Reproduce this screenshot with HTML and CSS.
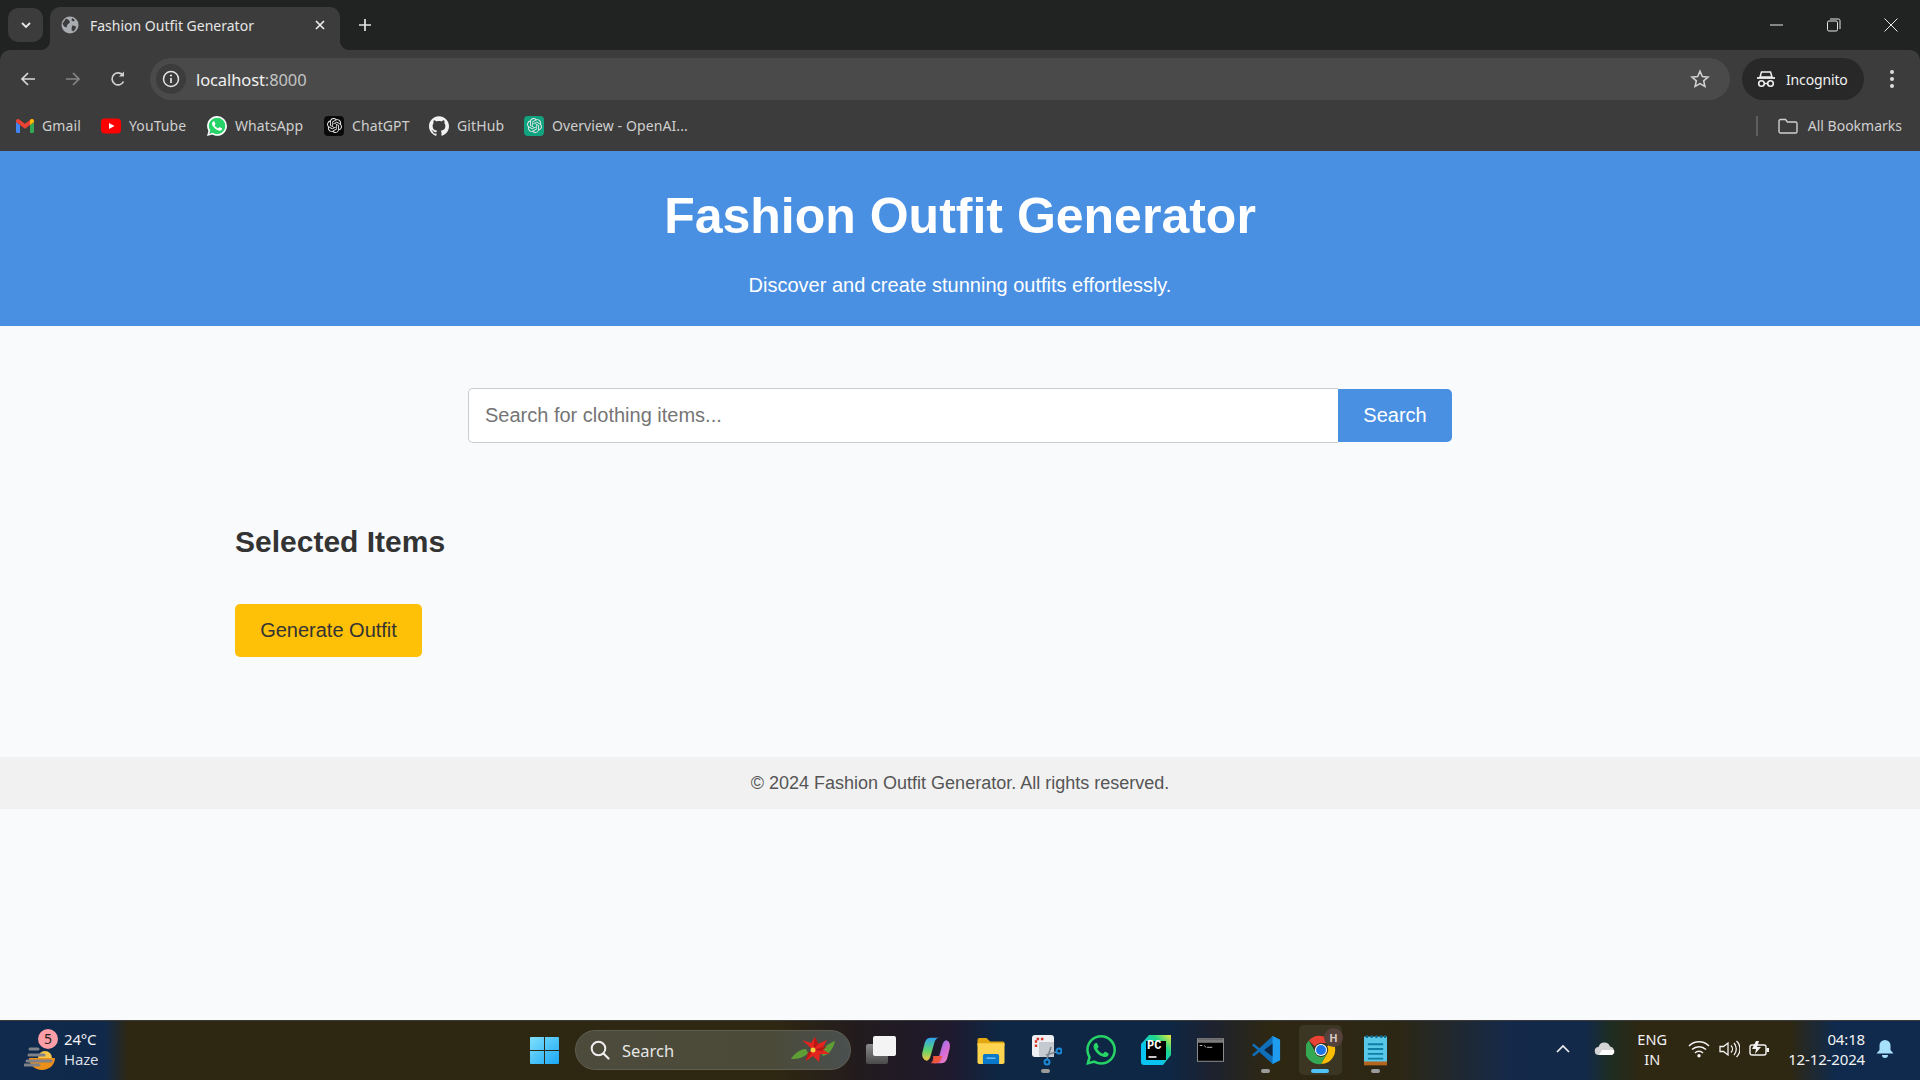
FILE: index.html
```html
<!DOCTYPE html>
<html lang="en">
<head>
<meta charset="utf-8">
<title>Fashion Outfit Generator</title>
<link rel="stylesheet" href="styles.css">
</head>
<body>
<div class="browser">
  <div class="tabstrip">
    <div class="tab-search"><svg width="14" height="14" viewBox="0 0 14 14"><path d="M3 5l4 4 4-4" fill="none" stroke="#e8e8e8" stroke-width="1.8"/></svg></div>
    <div class="tab">
      <svg class="favicon" width="18" height="18" viewBox="0 0 18 18"><circle cx="9" cy="9" r="8.500" fill="#a9adb1"/><path d="M5 2.500l3 1.500 1 2.500-2.500 2-1 3-2.500-1-1.500-3zM11 9.500l3.500.5.500 2-2.500 3.500-2-1.500z M11 2l3 2-1.500 1.500-2-1z" fill="#3c3c3c"/></svg>
      <span class="tab-title">Fashion Outfit Generator</span>
      <svg class="tab-close" width="12" height="12" viewBox="0 0 12 12"><path d="M2 2l8 8M10 2l-8 8" stroke="#eee" stroke-width="1.700"/></svg>
    </div>
    <svg class="new-tab" width="14" height="14" viewBox="0 0 14 14"><path d="M7 1v12M1 7h12" stroke="#e4e4e4" stroke-width="1.700"/></svg>
    <div class="win-controls">
      <svg width="14" height="14" viewBox="0 0 14 14"><path d="M0 7h13" stroke="#e8e8e8"/></svg>
      <svg width="14" height="14" viewBox="0 0 14 14"><rect x=".5" y="3" width="10" height="10" rx="1.500" fill="none" stroke="#e8e8e8"/><path d="M3 1h8.500A1.500 1.500 0 0 1 13 2.500V11" fill="none" stroke="#e8e8e8"/></svg>
      <svg width="14" height="14" viewBox="0 0 14 14"><path d="M.5.5l13 13M13.500.5l-13 13" stroke="#e8e8e8"/></svg>
    </div>
  </div>
  <div class="toolbar">
    <div class="nav-btns">
      <svg width="18" height="18" viewBox="0 0 18 18"><path d="M16 9H3M9 3L3 9l6 6" fill="none" stroke="#d8d8d8" stroke-width="1.700"/></svg>
      <svg width="18" height="18" viewBox="0 0 18 18"><path d="M2 9h13M9 3l6 6-6 6" fill="none" stroke="#858585" stroke-width="1.700"/></svg>
      <svg width="18" height="18" viewBox="0 0 18 18"><path d="M14.500 11.500A6 6 0 1 1 14 5.500" fill="none" stroke="#d0d0d0" stroke-width="1.700"/><path d="M15 1.500v5h-5z" fill="#d0d0d0"/></svg>
    </div>
    <div class="omnibox">
      <div class="info-chip"><svg width="18" height="18" viewBox="0 0 18 18"><circle cx="9" cy="9" r="7.500" fill="none" stroke="#e4e4e4" stroke-width="1.500"/><path d="M9 8v5" stroke="#e4e4e4" stroke-width="1.700"/><circle cx="9" cy="5.500" r="1.100" fill="#e4e4e4"/></svg></div>
      <span class="url">localhost<span class="url-port">:8000</span></span>
      <svg class="star" width="20" height="20" viewBox="0 0 20 20"><path d="M10 2.300l2.300 5.200 5.700.6-4.300 3.800 1.200 5.600-4.900-2.900-4.900 2.900 1.200-5.600L2 8.100l5.700-.6z" fill="none" stroke="#d0d0d0" stroke-width="1.600"/></svg>
    </div>
    <div class="incognito">
      <svg width="20" height="18" viewBox="0 0 20 18"><path d="M5.500 2h9l1.500 5H4z" fill="none" stroke="#f0f0f0" stroke-width="1.500"/><path d="M1 8h18" stroke="#f0f0f0" stroke-width="1.800"/><circle cx="5.500" cy="13.500" r="2.800" fill="none" stroke="#f0f0f0" stroke-width="1.600"/><circle cx="14.500" cy="13.500" r="2.800" fill="none" stroke="#f0f0f0" stroke-width="1.600"/><path d="M8.500 13.500h3" stroke="#f0f0f0" stroke-width="1.500"/></svg>
      <span>Incognito</span>
    </div>
    <svg class="menu-dots" width="6" height="20" viewBox="0 0 6 20"><circle cx="3" cy="3" r="2" fill="#ddd"/><circle cx="3" cy="10" r="2" fill="#ddd"/><circle cx="3" cy="17" r="2" fill="#ddd"/></svg>
  </div>
  <div class="bookmarks">
    <div class="bm bm-gmail">
      <svg width="18" height="14" viewBox="0 0 18 14"><path d="M0 3v9.500A1.500 1.500 0 0 0 1.500 14H4V6z" fill="#4285f4"/><path d="M14 6v8h2.500a1.500 1.500 0 0 0 1.500-1.500V3z" fill="#34a853"/><path d="M0 3l4 3 5 3.700L14 6l4-3V2C18 .3 16 -.5 14.800.5L9 4.800 3.200.5C2 -.5 0 .3 0 2z" fill="#ea4335"/><path d="M14 6l4-3V2C18 .3 16 -.5 14.800.500L14 1z" fill="#fbbc04"/></svg>
      <span>Gmail</span>
    </div>
    <div class="bm bm-yt">
      <svg width="20" height="20" viewBox="0 0 20 20"><rect y="2.500" width="20" height="15" rx="4" fill="#f00"/><path d="M8 7l5.500 3L8 13z" fill="#fff"/></svg>
      <span>YouTube</span>
    </div>
    <div class="bm bm-wa">
      <svg width="20" height="20" viewBox="0 0 24 24"><circle cx="12" cy="12" r="11.500" fill="#25d366"/><path fill="#fff" d="M17.472 14.382c-.297-.149-1.758-.867-2.030-.967-.273-.099-.471-.148-.670.150-.197.297-.767.966-.940 1.164-.173.199-.347.223-.644.075-.297-.150-1.255-.463-2.390-1.475-.883-.788-1.480-1.761-1.653-2.059-.173-.297-.018-.458.130-.606.134-.133.298-.347.446-.520.149-.174.198-.298.298-.497.099-.198.050-.371-.025-.520-.075-.149-.669-1.612-.916-2.207-.242-.579-.487-.500-.669-.510-.173-.008-.371-.010-.570-.010-.198 0-.520.074-.792.372-.272.297-1.040 1.016-1.040 2.479 0 1.462 1.065 2.875 1.213 3.074.149.198 2.096 3.200 5.077 4.487.709.306 1.262.489 1.694.625.712.227 1.360.195 1.871.118.571-.085 1.758-.719 2.006-1.413.248-.694.248-1.289.173-1.413-.074-.124-.272-.198-.570-.347m-5.421 7.403h-.004a9.870 9.870 0 01-5.031-1.378l-.361-.214-3.741.982.998-3.648-.235-.374a9.860 9.860 0 01-1.510-5.260c.001-5.450 4.436-9.884 9.888-9.884 2.640 0 5.122 1.030 6.988 2.898a9.825 9.825 0 012.893 6.994c-.003 5.450-4.437 9.884-9.885 9.884m8.413-18.297A11.815 11.815 0 0012.050 0C5.495 0 .160 5.335.157 11.892c0 2.096.547 4.142 1.588 5.945L.057 24l6.305-1.654a11.882 11.882 0 005.683 1.448h.005c6.554 0 11.890-5.335 11.893-11.893a11.821 11.821 0 00-3.480-8.413Z"/></svg>
      <span>WhatsApp</span>
    </div>
    <div class="bm bm-gpt">
      <span class="gpt-tile gpt-black"><svg width="15" height="15" viewBox="0 0 24 24"><path class="knot" d="M22.2819 9.8211a5.9847 5.9847 0 0 0-.5157-4.9108 6.0462 6.0462 0 0 0-6.5098-2.9A6.0651 6.0651 0 0 0 4.9807 4.1818a5.9847 5.9847 0 0 0-3.9977 2.9 6.0462 6.0462 0 0 0 .7427 7.0966 5.98 5.98 0 0 0 .511 4.9107 6.051 6.051 0 0 0 6.5146 2.9001A5.9847 5.9847 0 0 0 13.2599 24a6.0557 6.0557 0 0 0 5.7718-4.2058 5.9894 5.9894 0 0 0 3.9977-2.9001 6.0557 6.0557 0 0 0-.7475-7.0729zm-9.022 12.6081a4.4755 4.4755 0 0 1-2.8764-1.0408l.1419-.0804 4.7783-2.7582a.7948.7948 0 0 0 .3927-.6813v-6.7369l2.02 1.1686a.071.071 0 0 1 .038.052v5.5826a4.504 4.504 0 0 1-4.4945 4.4944zm-9.6607-4.1254a4.4708 4.4708 0 0 1-.5346-3.0137l.142.0852 4.783 2.7582a.7712.7712 0 0 0 .7806 0l5.8428-3.3685v2.3324a.0804.0804 0 0 1-.0332.0615L9.74 19.9502a4.4992 4.4992 0 0 1-6.1408-1.6464zM2.3408 7.8956a4.485 4.485 0 0 1 2.3655-1.9728V11.6a.7664.7664 0 0 0 .3879.6765l5.8144 3.3543-2.0201 1.1685a.0757.0757 0 0 1-.071 0l-4.8303-2.7865A4.504 4.504 0 0 1 2.3408 7.872zm16.5963 3.8558L13.1038 8.364 15.1192 7.2a.0757.0757 0 0 1 .071 0l4.8303 2.7913a4.4944 4.4944 0 0 1-.6765 8.1042v-5.6772a.79.79 0 0 0-.407-.667zm2.0107-3.0231l-.142-.0852-4.7735-2.7818a.7759.7759 0 0 0-.7854 0L9.409 9.2297V6.8974a.0662.0662 0 0 1 .0284-.0615l4.8303-2.7866a4.4992 4.4992 0 0 1 6.6802 4.66zM8.3065 12.863l-2.02-1.1638a.0804.0804 0 0 1-.038-.0567V6.0742a4.4992 4.4992 0 0 1 7.3757-3.4537l-.142.0805L8.704 5.459a.7948.7948 0 0 0-.3927.6813zm1.0976-2.3654l2.602-1.4998 2.6069 1.4998v2.9994l-2.5974 1.4997-2.6067-1.4997Z"/></svg></span>
      <span>ChatGPT</span>
    </div>
    <div class="bm bm-gh">
      <svg width="20" height="20" viewBox="0 0 24 24"><path fill="#f2f2f2" d="M12 .297c-6.630 0-12 5.373-12 12 0 5.303 3.438 9.800 8.205 11.385.600.113.820-.258.820-.577 0-.285-.010-1.040-.015-2.040-3.338.724-4.042-1.610-4.042-1.610C4.422 18.070 3.633 17.700 3.633 17.700c-1.087-.744.084-.729.084-.729 1.205.084 1.838 1.236 1.838 1.236 1.070 1.835 2.809 1.305 3.495.998.108-.776.417-1.305.760-1.605-2.665-.300-5.466-1.332-5.466-5.930 0-1.310.465-2.380 1.235-3.220-.135-.303-.540-1.523.105-3.176 0 0 1.005-.322 3.300 1.230.960-.267 1.980-.399 3-.405 1.020.006 2.040.138 3 .405 2.280-1.552 3.285-1.230 3.285-1.230.645 1.653.240 2.873.120 3.176.765.840 1.230 1.910 1.230 3.220 0 4.610-2.805 5.625-5.475 5.920.420.360.810 1.096.810 2.220 0 1.606-.015 2.896-.015 3.286 0 .315.210.690.825.570C20.565 22.092 24 17.592 24 12.297c0-6.627-5.373-12-12-12"/></svg>
      <span>GitHub</span>
    </div>
    <div class="bm bm-oai">
      <span class="gpt-tile gpt-green"><svg width="15" height="15" viewBox="0 0 24 24"><path class="knot" d="M22.2819 9.8211a5.9847 5.9847 0 0 0-.5157-4.9108 6.0462 6.0462 0 0 0-6.5098-2.9A6.0651 6.0651 0 0 0 4.9807 4.1818a5.9847 5.9847 0 0 0-3.9977 2.9 6.0462 6.0462 0 0 0 .7427 7.0966 5.98 5.98 0 0 0 .511 4.9107 6.051 6.051 0 0 0 6.5146 2.9001A5.9847 5.9847 0 0 0 13.2599 24a6.0557 6.0557 0 0 0 5.7718-4.2058 5.9894 5.9894 0 0 0 3.9977-2.9001 6.0557 6.0557 0 0 0-.7475-7.0729zm-9.022 12.6081a4.4755 4.4755 0 0 1-2.8764-1.0408l.1419-.0804 4.7783-2.7582a.7948.7948 0 0 0 .3927-.6813v-6.7369l2.02 1.1686a.071.071 0 0 1 .038.052v5.5826a4.504 4.504 0 0 1-4.4945 4.4944zm-9.6607-4.1254a4.4708 4.4708 0 0 1-.5346-3.0137l.142.0852 4.783 2.7582a.7712.7712 0 0 0 .7806 0l5.8428-3.3685v2.3324a.0804.0804 0 0 1-.0332.0615L9.74 19.9502a4.4992 4.4992 0 0 1-6.1408-1.6464zM2.3408 7.8956a4.485 4.485 0 0 1 2.3655-1.9728V11.6a.7664.7664 0 0 0 .3879.6765l5.8144 3.3543-2.0201 1.1685a.0757.0757 0 0 1-.071 0l-4.8303-2.7865A4.504 4.504 0 0 1 2.3408 7.872zm16.5963 3.8558L13.1038 8.364 15.1192 7.2a.0757.0757 0 0 1 .071 0l4.8303 2.7913a4.4944 4.4944 0 0 1-.6765 8.1042v-5.6772a.79.79 0 0 0-.407-.667zm2.0107-3.0231l-.142-.0852-4.7735-2.7818a.7759.7759 0 0 0-.7854 0L9.409 9.2297V6.8974a.0662.0662 0 0 1 .0284-.0615l4.8303-2.7866a4.4992 4.4992 0 0 1 6.6802 4.66zM8.3065 12.863l-2.02-1.1638a.0804.0804 0 0 1-.038-.0567V6.0742a4.4992 4.4992 0 0 1 7.3757-3.4537l-.142.0805L8.704 5.459a.7948.7948 0 0 0-.3927.6813zm1.0976-2.3654l2.602-1.4998 2.6069 1.4998v2.9994l-2.5974 1.4997-2.6067-1.4997Z"/></svg></span>
      <span>Overview - OpenAI...</span>
    </div>
    <div class="bm-sep"></div>
    <div class="bm bm-all">
      <svg width="20" height="16" viewBox="0 0 20 16"><path d="M1 3a1.500 1.500 0 0 1 1.500-1.500h5l2 2.500h8A1.500 1.500 0 0 1 19 5.500v8a1.500 1.500 0 0 1-1.500 1.500h-15A1.500 1.500 0 0 1 1 13.500z" fill="none" stroke="#cfcfcf" stroke-width="1.400"/></svg>
      <span>All Bookmarks</span>
    </div>
  </div>
</div>

<div class="page">
  <header class="site-header">
    <h1>Fashion Outfit Generator</h1>
    <p>Discover and create stunning outfits effortlessly.</p>
  </header>
  <main class="content">
    <form class="search-form">
      <input class="search-input" type="text" placeholder="Search for clothing items...">
      <button class="search-btn" type="button">Search</button>
    </form>
    <section class="selected">
      <h2>Selected Items</h2>
      <button class="generate-btn" type="button">Generate Outfit</button>
    </section>
  </main>
  <footer class="site-footer">© 2024 Fashion Outfit Generator. All rights reserved.</footer>
</div>

<div class="taskbar">
  <div class="weather">
    <div class="weather-icon">
      <svg width="32" height="26" viewBox="0 0 32 26"><path d="M5 13h26c0 7-6 12-13 12S5 20 5 13z" fill="#ee8f17"/><path d="M14 13a7 7 0 0 1 14 0z" fill="#f7c64a"/><path d="M6 4h8M5 10h15M3 16h24M1 20h14" stroke="#7f8288" stroke-width="3" stroke-linecap="round"/></svg>
      <span class="weather-badge">5</span>
    </div>
    <div class="weather-text"><span>24°C</span><span class="weather-haze">Haze</span></div>
  </div>
  <div class="task-center">
    <svg class="win-logo" width="29" height="29" viewBox="0 0 30 30"><defs><linearGradient id="w1" x1="0" y1="0" x2="1" y2="1"><stop offset="0" stop-color="#7fe0fb"/><stop offset="1" stop-color="#1ba7f5"/></linearGradient></defs><path d="M1 1h13.500v13.500H0V2a1 1 0 0 1 1-1zM15.500 1H29a1 1 0 0 1 1 1v12.500H15.500zM0 15.500h14.500V29H1a1 1 0 0 1-1-1zM15.500 15.500H30V28a1 1 0 0 1-1 1H15.500z" fill="url(#w1)"/></svg>
    <div class="task-search">
      <svg width="22" height="22" viewBox="0 0 22 22"><circle cx="9.500" cy="9.500" r="6.800" fill="none" stroke="#eee" stroke-width="2"/><path d="M14.500 14.500l5 5" stroke="#eee" stroke-width="2.200" stroke-linecap="round"/></svg>
      <span>Search</span>
      <svg class="poinsettia" width="46" height="28" viewBox="0 0 46 28"><path d="M16 13C10 13 3 19 1 23c6 0 13-1 17-6zM30 14c5-3 11-8 15-9-1 6-5 13-12 15z" fill="#5f9e35"/><path d="M23 14L12 4l9 3 4-6 3 7 9-4-5 9 8 5-10 0-1 8-6-6-7 5 2-8z" fill="#e3241f"/><path d="M23 14L25 1l3 7zM23 14l14-4-5 5zM23 14l-7 11 2-8z" fill="#b81714"/><circle cx="23" cy="14" r="2.500" fill="#f4d03f"/></svg>
    </div>
    <div class="task-icons">
      <div class="ti">
        <svg width="30" height="28" viewBox="0 0 30 28"><defs><linearGradient id="tv" x1="0" y1="0" x2="0" y2="1"><stop offset="0" stop-color="#8a8a8a"/><stop offset="1" stop-color="#4a4a4a"/></linearGradient></defs><rect y="8" width="22" height="20" rx="2" fill="url(#tv)"/><rect x="7" width="23" height="20" rx="2" fill="#f4f4f4"/></svg>
      </div>
      <div class="ti">
        <svg width="30" height="29" viewBox="0 0 32 32"><defs><linearGradient id="c1" x1="0" y1="0" x2="0" y2="1"><stop offset="0" stop-color="#2fa4f0"/><stop offset=".55" stop-color="#5fd36f"/><stop offset="1" stop-color="#f5c542"/></linearGradient><linearGradient id="c2" x1="0" y1="0" x2="1" y2="1"><stop offset="0" stop-color="#5f7ff0"/><stop offset=".6" stop-color="#d86ad8"/><stop offset="1" stop-color="#f08ab0"/></linearGradient></defs><path d="M10 2h10c-3 0-5 2-6 6l-4 14c-.8 3-3 6-5 5-3-1-5-4-4-9l2-8c1-5 3-8 7-8z" fill="url(#c1)"/><path d="M22 30h-9c3 0 5-2 6-6l4-14c.8-3 3-6 5-5 3 1 4 4 3 9l-2 8c-1 5-3 8-7 8z" fill="url(#c2)"/><path d="M13 22h10l-2 5c-1 2-3 3-5 3h-6c2-1 3-3 3-8z" fill="#f0553e"/></svg>
      </div>
      <div class="ti">
        <svg width="30" height="27" viewBox="0 0 32 30"><path d="M1 3a2 2 0 0 1 2-2h8l4 4h14a2 2 0 0 1 2 2v3H1z" fill="#e3a70f"/><path d="M1 7h30v21a2 2 0 0 1-2 2H3a2 2 0 0 1-2-2z" fill="#fdd44f"/><path d="M7 21a2 2 0 0 1 2-2h14a2 2 0 0 1 2 2v9H7z" fill="#0a78c9"/><path d="M11 23.500h10" stroke="#7cc6f5" stroke-width="1.500"/></svg>
      </div>
      <div class="ti ti-dot">
        <svg width="32" height="32" viewBox="0 0 32 32"><rect x="2" y="1" width="22" height="22" rx="3" fill="#eef0f3"/><path d="M6 13V5h9" fill="none" stroke="#d8342c" stroke-width="2.400" stroke-dasharray="2.500 1.800"/><path d="M9 8h15v15H11a2 2 0 0 1-2-2z" fill="#c5cad0"/><path d="M26 18l-10 3M17 25l4-12" stroke="#7c858e" stroke-width="1.600"/><circle cx="29" cy="17" r="2.500" fill="none" stroke="#1e88d8" stroke-width="2"/><circle cx="17" cy="28" r="2.500" fill="none" stroke="#1e88d8" stroke-width="2"/></svg>
      </div>
      <div class="ti">
        <svg width="30" height="30" viewBox="0 0 24 24"><path fill="#25d366" d="M17.472 14.382c-.297-.149-1.758-.867-2.030-.967-.273-.099-.471-.148-.670.150-.197.297-.767.966-.940 1.164-.173.199-.347.223-.644.075-.297-.150-1.255-.463-2.390-1.475-.883-.788-1.480-1.761-1.653-2.059-.173-.297-.018-.458.130-.606.134-.133.298-.347.446-.520.149-.174.198-.298.298-.497.099-.198.050-.371-.025-.520-.075-.149-.669-1.612-.916-2.207-.242-.579-.487-.500-.669-.510-.173-.008-.371-.010-.570-.010-.198 0-.520.074-.792.372-.272.297-1.040 1.016-1.040 2.479 0 1.462 1.065 2.875 1.213 3.074.149.198 2.096 3.200 5.077 4.487.709.306 1.262.489 1.694.625.712.227 1.360.195 1.871.118.571-.085 1.758-.719 2.006-1.413.248-.694.248-1.289.173-1.413-.074-.124-.272-.198-.570-.347m-5.421 7.403h-.004a9.870 9.870 0 01-5.031-1.378l-.361-.214-3.741.982.998-3.648-.235-.374a9.860 9.860 0 01-1.510-5.260c.001-5.450 4.436-9.884 9.888-9.884 2.640 0 5.122 1.030 6.988 2.898a9.825 9.825 0 012.893 6.994c-.003 5.450-4.437 9.884-9.885 9.884m8.413-18.297A11.815 11.815 0 0012.050 0C5.495 0 .160 5.335.157 11.892c0 2.096.547 4.142 1.588 5.945L.057 24l6.305-1.654a11.882 11.882 0 005.683 1.448h.005c6.554 0 11.890-5.335 11.893-11.893a11.821 11.821 0 00-3.480-8.413Z"/></svg>
      </div>
      <div class="ti">
        <svg width="30" height="30" viewBox="0 0 30 30"><defs><linearGradient id="pc" x1="0" y1="1" x2="1" y2="0"><stop offset=".35" stop-color="#09c3f0"/><stop offset=".7" stop-color="#21d789"/><stop offset="1" stop-color="#f3e93c"/></linearGradient></defs><path d="M8 0H30V20L22 30H3a3 3 0 0 1-3-3V9z" fill="url(#pc)"/><rect x="5" y="6" width="20" height="19" fill="#000"/><path d="M7.500 22h8" stroke="#fff" stroke-width="1.600"/></svg>
        <span class="pc-label">PC</span>
      </div>
      <div class="ti">
        <svg width="27" height="24" viewBox="0 0 30 26"><rect x=".5" y=".5" width="29" height="25" fill="#000" stroke="#9a9a9a"/><rect x="1" y="1" width="28" height="4" fill="#7b7b7b"/><path d="M3 8h3M8 8l2 2M11 10h6" stroke="#ccc"/></svg>
      </div>
      <div class="ti ti-dot">
        <svg width="30" height="32" viewBox="0 0 32 32"><path d="M23 1L31 5v22l-8 4-14-13-6 5-2-2 6-5-6-5 2-2 6 5z" fill="#0f6fb8"/><path d="M23 1l8 4v22l-8 4z" fill="#1f9cf0"/><path d="M23 9l-9 7 9 7z" fill="#10263f"/></svg>
      </div>
      <div class="ti ti-chrome">
        <svg width="30" height="30" viewBox="0 0 32 32"><path d="M16 1a15 15 0 0 1 13 7.500H16a7.500 7.500 0 0 0-6.500 3.750L3 5.900A15 15 0 0 1 16 1z" fill="#ea4335"/><path d="M29 8.500A15 15 0 0 1 16 31l6.500-11.250A7.500 7.500 0 0 0 22.500 12z" fill="#fbbc04"/><path d="M16 31A15 15 0 0 1 3 5.900l6.500 11.350A7.500 7.500 0 0 0 16 23.500c2.500 0 4.900-1.400 6.500-3.750z" fill="#34a853"/><circle cx="16" cy="16" r="6.500" fill="#fff"/><circle cx="16" cy="16" r="5.300" fill="#1a73e8"/></svg>
        <span class="chrome-badge">H</span>
      </div>
      <div class="ti ti-dot">
        <svg width="23" height="32" viewBox="0 0 24 32"><rect x="0" y="2" width="24" height="28" fill="#58c7e8"/><rect y="28" width="24" height="4" fill="#b5651d"/><path d="M2 2h2M7 2h2M12 2h2M17 2h2M21 2h2" stroke="#0b6b8a" stroke-width="3"/><path d="M4 10h16M4 15h16M4 20h16M4 25h16" stroke="#0e7fa5" stroke-width="2"/></svg>
      </div>
    </div>
  </div>
  <div class="tray">
    <svg class="tray-caret" width="16" height="16" viewBox="0 0 16 16"><path d="M2 11l6-6 6 6" fill="none" stroke="#eee" stroke-width="1.700"/></svg>
    <svg class="tray-cloud" width="22" height="14" viewBox="0 0 22 14"><path d="M5 13a4 4 0 0 1-.500-8A6 6 0 0 1 16 4.500 4.400 4.400 0 0 1 17 13z" fill="#d4d4d4"/><path d="M5 13h13a4 4 0 0 0 2-5H8z" fill="#fff"/></svg>
    <div class="tray-lang"><span>ENG</span><span>IN</span></div>
    <div class="tray-status">
      <svg width="22" height="18" viewBox="0 0 22 18"><path d="M1 6a14 14 0 0 1 20 0M4 9.500a10 10 0 0 1 14 0M7 13a5.500 5.500 0 0 1 8 0" fill="none" stroke="#f2f2f2" stroke-width="1.500"/><circle cx="11" cy="15.800" r="1.700" fill="#f2f2f2"/></svg>
      <svg width="21" height="18" viewBox="0 0 21 18"><path d="M1 6.500h3.500L9 3v12l-4.500-3.500H1z" fill="none" stroke="#f2f2f2" stroke-width="1.300"/><path d="M12 5.500a5 5 0 0 1 0 7M15 3a9 9 0 0 1 0 12M17.500 1a11 11 0 0 1 0 16" fill="none" stroke="#f2f2f2" stroke-width="1.300"/></svg>
      <svg width="21" height="18" viewBox="0 0 21 18"><rect x="1" y="5" width="16" height="10" rx="2" fill="none" stroke="#f2f2f2" stroke-width="1.400"/><rect x="17.500" y="8" width="2.500" height="4" fill="#f2f2f2"/><path d="M7 1L3 9h4l-1 5 6-7H8l2-6z" fill="#f2f2f2"/></svg>
    </div>
    <div class="tray-clock"><span>04:18</span><span>12-12-2024</span></div>
    <svg class="tray-bell" width="18" height="20" viewBox="0 0 18 20"><path d="M9 1a5.500 5.500 0 0 1 5.500 5.500V11l3 3.500H.5l3-3.500V6.500A5.500 5.500 0 0 1 9 1z" fill="#a7e0fb"/><path d="M6 16h6a3 3 0 0 1-6 0z" fill="#a7e0fb"/></svg>
  </div>
</div>
</body>
</html>
```
FILE: styles.css
```css
* { box-sizing: border-box; }
html, body { margin: 0; height: 100%; }
body {
  width: 1920px;
  height: 1080px;
  overflow: hidden;
  display: flex;
  flex-direction: column;
  background: #f9fafc;
  font-family: "Liberation Sans", Arial, sans-serif;
}

/* Browser chrome */
.browser { flex: none; height: 151px; background: #202322; font-family: "Noto Sans", sans-serif; color: #e8e8e8; }
.tabstrip { height: 50px; display: flex; align-items: flex-end; position: relative; }
.tab-search { width: 35px; height: 34px; margin: 0 7px 8px 8px; background: #3c3c3c; border-radius: 10px; display: flex; align-items: center; justify-content: center; }
.tab { position: relative; width: 290px; height: 43px; background: #3c3c3c; border-radius: 10px 10px 0 0; display: flex; align-items: center; padding: 0 14px 7px 11px; }
.tab::before, .tab::after { content: ""; position: absolute; bottom: 0; width: 10px; height: 10px; }
.tab::before { left: -10px; background: radial-gradient(circle at 0 0, transparent 10px, #3c3c3c 10.500px); }
.tab::after { right: -10px; background: radial-gradient(circle at 100% 0, transparent 10px, #3c3c3c 10.500px); }
.favicon { flex: none; }
.tab-title { margin-left: 11px; font-size: 14px; flex: 1; white-space: nowrap; color: #e6e6e6; }
.tab-close { flex: none; }
.new-tab { margin: 0 0 18px 18px; }
.win-controls { margin-left: auto; align-self: flex-start; display: flex; gap: 43px; padding: 18px 22px 0 0; }
.toolbar { height: 50px; background: #3c3c3c; border-radius: 10px 10px 0 0; display: flex; align-items: center; padding: 8px 0 0 19px; }
.nav-btns { display: flex; gap: 27px; width: 131px; }
.omnibox { width: 1580px; height: 42px; background: #4a4a4a; border-radius: 21px; display: flex; align-items: center; padding: 0 20px 0 6px; }
.info-chip { width: 30px; height: 30px; background: #3c3c3c; border-radius: 50%; display: flex; align-items: center; justify-content: center; }
.url { margin-left: 10px; font-size: 16.500px; color: #f0f0f0; flex: 1; letter-spacing: -.1px; }
.url-port { color: #c4c4c4; }
.incognito { width: 122px; height: 42px; margin-left: 12px; background: #282828; border-radius: 21px; display: flex; align-items: center; gap: 10px; padding-left: 14px; font-size: 14px; color: #f0f0f0; letter-spacing: -.15px; }
.menu-dots { margin-left: 25px; }
.bookmarks { height: 51px; background: #3c3c3c; display: flex; align-items: center; padding-left: 16px; font-size: 14px; color: #cfcfcf; letter-spacing: .1px; }
.bm { display: flex; align-items: center; gap: 8px; white-space: nowrap; }
.bm-gmail { width: 85px; }
.bm-yt { width: 106px; }
.bm-wa { width: 117px; }
.bm-gpt { width: 105px; }
.bm-gh { width: 95px; }
.gpt-tile { width: 20px; height: 20px; border-radius: 4px; display: flex; align-items: center; justify-content: center; }
.gpt-black { background: #0a0a0a; }
.gpt-green { background: #10a37f; }
.knot { fill: #e8e8e8; }
.bm-oai { flex: none; }
.bm-sep { width: 2px; height: 20px; background: #5e5e5e; margin-left: auto; margin-right: 20px; }
.bm-all { gap: 10px; padding-right: 18px; letter-spacing: 0; }

/* Page */
.page { flex: 1; min-height: 0; display: flex; flex-direction: column; }
.site-header { height: 175px; background: #4a90e2; color: #fff; text-align: center; padding-top: 37px; }
.site-header h1 { margin: 0; font-size: 50px; line-height: 56px; font-weight: 700; }
.site-header p { margin: 29px 0 0; font-size: 20px; line-height: 24px; }
.content { height: 431px; padding: 62px 235px 0; }
.search-form { display: flex; align-items: center; width: 984px; margin: 0 auto; height: 55px; }
.search-input { flex: 1; min-width: 0; height: 100%; border: 1px solid #ccc; border-right: 0; border-radius: 5px 0 0 5px; padding: 0 16px; font: 20px "Liberation Sans", Arial, sans-serif; background: #fff; outline: 0; }
.search-input::placeholder { color: #757575; opacity: 1; }
.search-btn { width: 114px; height: 53px; border: 0; border-radius: 0 5px 5px 0; background: #4a90e2; color: #fff; font: 20px "Liberation Sans", Arial, sans-serif; }
.selected h2 { margin: 81px 0 0; font-size: 30px; line-height: 36px; color: #333; font-weight: 700; }
.generate-btn { display: block; margin-top: 44px; width: 187px; height: 53px; border: 0; border-radius: 5px; background: #ffc107; color: #333; font: 20px "Liberation Sans", Arial, sans-serif; }
.site-footer { height: 52px; background: #f1f1f1; color: #555; font-size: 18px; line-height: 52px; text-align: center; }

/* Taskbar */
.taskbar {
  flex: none; height: 60px; display: flex; align-items: center;
  border-top: 1px solid #3a3a3a;
  font-family: "Noto Sans", sans-serif; color: #f2f2f2;
  background: linear-gradient(90deg, #0f2a4d 0, #10294a 105px, #2e2712 128px, #2e2712 780px, #221b1e 860px, #1f1a2e 950px, #0e2744 1000px, #0e2744 1170px, #1c2230 1210px, #2e2712 1270px, #2c2715 1400px, #14294a 1510px, #12294a 1585px, #1d2d22 1610px, #2e2712 1640px, #2e2712 1790px, #0f2a4d 1835px, #0f2a4d 1920px);
}
.weather { width: 530px; padding-left: 24px; display: flex; gap: 8px; align-items: center; }
.weather-icon { position: relative; width: 32px; height: 46px; display: flex; align-items: flex-end; padding-bottom: 3px; }
.weather-badge { position: absolute; left: 14px; top: 1px; width: 20px; height: 20px; border-radius: 50%; background: #ff9ea6; color: #222; font-size: 14px; line-height: 20px; text-align: center; }
.weather-text { display: flex; flex-direction: column; font-size: 15px; line-height: 20px; letter-spacing: -.2px; padding-bottom: 3px; }
.weather-haze { color: #d8dde2; }
.task-center { display: flex; align-items: center; padding-bottom: 1px; }
.win-logo { flex: none; }
.task-search { width: 276px; height: 40px; margin-left: 16px; background: linear-gradient(90deg, #4d4b3c, #4b4a38 70%, #4a5050); border: 1px solid #5f5e50; border-radius: 20px; display: flex; align-items: center; padding-left: 13px; font-size: 16.500px; color: #e6e6e6; gap: 11px; }
.poinsettia { margin-left: auto; margin-right: 14px; }
.task-icons { display: flex; margin-left: 2px; }
.ti { width: 55px; height: 44px; display: flex; align-items: center; justify-content: center; position: relative; }
.ti-dot::after { content: ""; position: absolute; bottom: -1px; left: 23px; width: 9px; height: 4px; border-radius: 2px; background: #9a9a9a; }
.ti-chrome::before { content: ""; position: absolute; top: -3px; bottom: -3px; left: 6px; right: 6px; background: rgba(255,255,255,.07); border-radius: 5px; }
.ti-chrome svg { position: relative; }
.ti-chrome::after { content: ""; position: absolute; bottom: -1px; left: 18px; width: 18px; height: 4px; border-radius: 2px; background: #4fc3f7; }
.chrome-badge { position: absolute; top: 0; right: 5px; width: 19px; height: 19px; border-radius: 50%; background: #55423c; color: #d8c8c0; font-size: 11px; font-weight: 700; line-height: 19px; text-align: center; }
.pc-label { position: absolute; top: 11px; left: 19px; font: 700 12px/14px "Liberation Mono", monospace; color: #fff; }
.tray { margin-left: auto; display: flex; align-items: center; padding: 0 26px 3px 0; }
.tray-lang { width: 40px; margin-left: 16px; display: flex; flex-direction: column; align-items: center; font-size: 14.500px; line-height: 20px; }
.tray-cloud { margin-left: 23px; }
.tray-status { display: flex; gap: 9px; margin-left: 16px; align-items: center; }
.tray-clock { display: flex; flex-direction: column; align-items: flex-end; margin-left: 18px; font-size: 15px; line-height: 20px; letter-spacing: -.15px; }
.tray-bell { margin-left: 11px; }
```
